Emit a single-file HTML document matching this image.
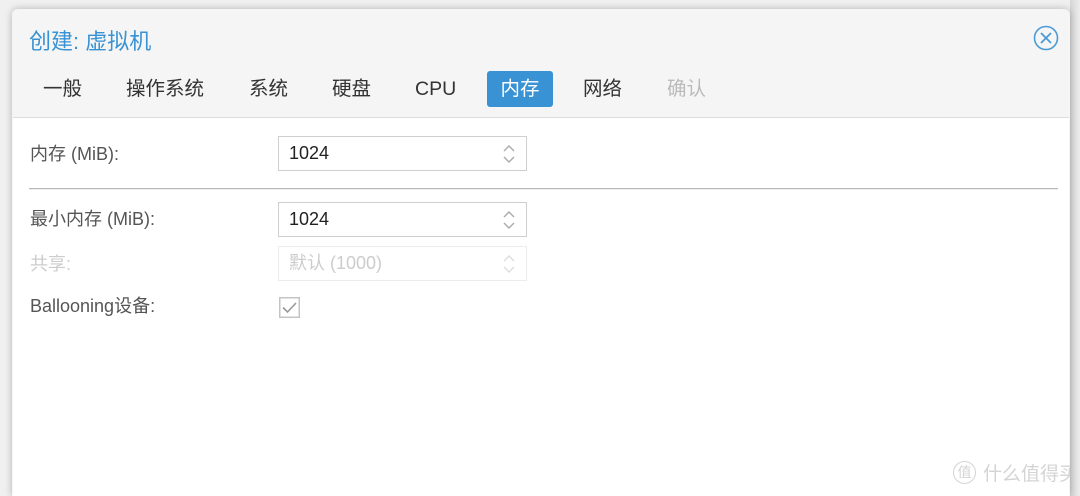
<!DOCTYPE html>
<html style="width:1080px;height:496px;overflow:hidden"><head><meta charset="utf-8"><style>
*{margin:0;padding:0;box-sizing:border-box}
body{width:1080px;height:496px;overflow:hidden;background:#f0f0f0;position:relative;font-family:"Liberation Sans","Noto Sans CJK SC",sans-serif}
.shadowR{position:absolute;left:1070px;top:0;width:10px;height:496px;background:linear-gradient(90deg,#d6d6d6,#ececec)}
.dlg{position:absolute;left:12px;top:9px;width:1058px;height:487px;background:#f5f5f5;border-radius:6px 6px 0 0;box-shadow:0 0 8px rgba(0,0,0,.25);overflow:hidden}
.title{position:absolute;left:17px;top:15px;font-size:22px;color:#3892d4}
.close{position:absolute;left:1021px;top:16px}
.tab{position:absolute;top:62px;height:36px;line-height:36px;font-size:19.5px;color:#333;white-space:nowrap}
.body{position:absolute;left:1px;top:108px;width:1056px;height:400px;background:#fff;border-top:1px solid #dcdcdc}
.lbl{position:absolute;left:17px;font-size:18px;color:#555;line-height:22px;white-space:nowrap}
.inp{position:absolute;left:265px;width:249px;height:35px;border:1px solid #cfcfcf;background:#fff;font-size:18px;color:#222;padding-left:10px;line-height:33px}
.inp svg{position:absolute;right:9px;top:6px}
.hr{position:absolute;left:16px;top:70px;width:1029px;height:2px;background:#b8b8b8;border-bottom:1px solid #eee}
</style></head><body>
<div style="position:absolute;left:1064px;top:324px;font-size:18px;color:#c8b8b0">e</div>
<div style="position:absolute;left:1064px;top:354px;font-size:18px;color:#bbb">o</div>
<div class="shadowR"></div>
<div class="dlg">
<div class="title">创建: 虚拟机</div>
<svg class="close" width="26" height="26" viewBox="0 0 26 26"><circle cx="13" cy="13" r="11.5" fill="none" stroke="#4a9ad6" stroke-width="1.6"/><path d="M8 8L18 18M18 8L8 18" stroke="#4a9ad6" stroke-width="1.8"/></svg>
<div class="tab" style="left:31px">一般</div>
<div class="tab" style="left:114px">操作系统</div>
<div class="tab" style="left:237px">系统</div>
<div class="tab" style="left:320px">硬盘</div>
<div class="tab" style="left:403px">CPU</div>
<div class="tab" style="left:475px;width:66px;text-align:center;background:#3892d4;color:#fff;border-radius:3px">内存</div>
<div class="tab" style="left:571px">网络</div>
<div class="tab" style="left:655px;color:#bbb">确认</div>
<div class="body">
<div class="lbl" style="top:25px">内存 (MiB):</div>
<div class="inp" style="top:18px">1024<svg width="16" height="22" viewBox="0 0 16 22"><path d="M3 8L8 3L13 8M3 14L8 19L13 14" fill="none" stroke="#aaa" stroke-width="1.4"/></svg></div>
<div class="hr"></div>
<div class="lbl" style="top:90px">最小内存 (MiB):</div>
<div class="inp" style="top:84px">1024<svg width="16" height="22" viewBox="0 0 16 22"><path d="M3 8L8 3L13 8M3 14L8 19L13 14" fill="none" stroke="#aaa" stroke-width="1.4"/></svg></div>
<div class="lbl" style="top:135px;color:#ccc">共享:</div>
<div class="inp" style="top:128px;border-color:#ececec;color:#ccc">默认 (1000)<svg width="16" height="22" viewBox="0 0 16 22"><path d="M3 8L8 3L13 8M3 14L8 19L13 14" fill="none" stroke="#ddd" stroke-width="1.4"/></svg></div>
<div class="lbl" style="top:177px">Ballooning设备:</div>
<svg style="position:absolute;left:266px;top:179px" width="21" height="21" viewBox="0 0 21 21"><rect x="0.75" y="0.75" width="19.5" height="19.5" fill="#fff" stroke="#c4c4c4" stroke-width="1.5"/><path d="M4 10.5L8.5 15L17 6" fill="none" stroke="#999" stroke-width="1.6"/></svg>
<div style="position:absolute;left:940px;top:341px;font-size:19px;color:#d4d4d4;display:flex;align-items:center;gap:7px;white-space:nowrap"><span style="display:inline-block;width:23px;height:23px;border:1.5px solid #d4d4d4;border-radius:50%;font-size:14px;line-height:20px;text-align:center">值</span>什么值得买</div>
</div>
</div>
</body></html>
